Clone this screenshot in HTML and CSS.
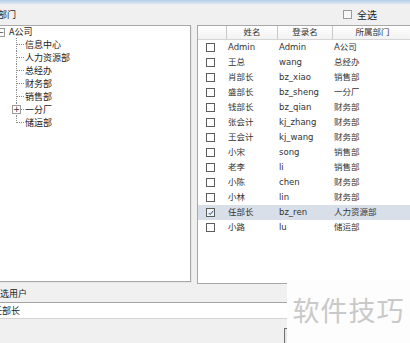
FILE: index.html
```html
<!DOCTYPE html>
<html lang="zh-CN">
<head>
  <meta charset="UTF-8">
  <title>选择用户</title>
  <link rel="stylesheet" href="styles.css">
</head>
<body>
  <div class="titlebar"></div>

  <div class="toolbar">
    <span class="caption">部门</span>
    <label class="select-all"><span class="box"></span>全选</label>
  </div>

  <div class="panels">
    <div class="tree-panel">
      <div class="tree-root"><span class="expander">−</span>A公司</div>
      <ul class="tree-children">
        <li>信息中心</li>
        <li>人力资源部</li>
        <li>总经办</li>
        <li>财务部</li>
        <li>销售部</li>
        <li class="collapsed"><span class="expander">+</span>一分厂</li>
        <li>储运部</li>
      </ul>
    </div>

    <div class="user-panel">
      <div class="grid-head">
        <div></div>
        <div>姓名</div>
        <div>登录名</div>
        <div>所属部门</div>
      </div>
      <div class="grid-body" id="gridBody"></div>
    </div>
  </div>

  <div class="selected-caption">已选用户</div>
  <div class="selected-input">任部长</div>
  <div class="actions"><button class="btn">确定</button></div>

  <div class="watermark">软件技巧</div>

  <script>
    const users = [
      ["Admin", "Admin", "A公司"],
      ["王总", "wang", "总经办"],
      ["肖部长", "bz_xiao", "销售部"],
      ["盛部长", "bz_sheng", "一分厂"],
      ["钱部长", "bz_qian", "财务部"],
      ["张会计", "kj_zhang", "财务部"],
      ["王会计", "kj_wang", "财务部"],
      ["小宋", "song", "销售部"],
      ["老李", "li", "销售部"],
      ["小陈", "chen", "财务部"],
      ["小林", "lin", "财务部"],
      ["任部长", "bz_ren", "人力资源部", true],
      ["小路", "lu", "储运部"]
    ];

    const gridBody = document.getElementById("gridBody");

    users.forEach(function (u) {
      const row = document.createElement("div");
      row.className = u[3] ? "grid-row selected" : "grid-row";
      const tick = u[3]
        ? '<svg viewBox="0 0 8 8" width="6" height="6"><polyline points="1,4 3,6 7,1" fill="none" stroke="#2b4a6b" stroke-width="1.3"/></svg>'
        : "";
      row.innerHTML =
        '<div class="cell-check"><span class="box">' + tick + '</span></div>' +
        '<div>' + u[0] + '</div>' +
        '<div>' + u[1] + '</div>' +
        '<div>' + u[2] + '</div>';
      gridBody.appendChild(row);
    });
  </script>
</body>
</html>
```

FILE: styles.css
```css
body {
  margin: 0;
  width: 410px;
  height: 343px;
  overflow: hidden;
  position: relative;
  background: #f0f0f0;
  color: #222;
  font-family: "Noto Sans CJK SC", sans-serif;
  font-size: 9px;
}

.titlebar {
  height: 4px;
  background: linear-gradient(to bottom, #b6cde6, #dbe7f4);
}

.toolbar {
  height: 21px;
  display: flex;
  align-items: center;
  justify-content: space-between;
  padding-right: 33px;
}

.caption {
  margin-left: -2px;
}

.select-all {
  display: flex;
  align-items: center;
  gap: 5px;
  font-size: 10px;
}

.select-all .box {
  width: 7px;
  height: 7px;
  border: 1px solid #9a9a9a;
  background: #f7f7f7;
}

/* две панели: дерево и список */
.panels {
  display: flex;
  align-items: flex-start;
  gap: 6px;
  height: 259px;
  margin-left: -10px;
}

.tree-panel {
  width: 199px;
  height: 255px;
  flex-shrink: 0;
  background: #fff;
  border: 1px solid #a8a8a8;
  box-shadow: 1px 1px 0 #e6e6e6;
}

.tree-root {
  height: 12px;
  line-height: 12px;
  display: flex;
  align-items: center;
}

.expander {
  width: 7px;
  height: 7px;
  border: 1px solid #9a9a9a;
  background: #fff;
  font-size: 8px;
  line-height: 7px;
  text-align: center;
  color: #333;
  font-family: "DejaVu Sans", sans-serif;
}

.tree-root .expander {
  margin-left: 5px;
  margin-right: 4px;
}

.tree-children {
  list-style: none;
  margin: 0 0 0 25px;
  padding: 0;
}

.tree-children li {
  position: relative;
  height: 13px;
  line-height: 13px;
  padding-left: 9px;
}

.tree-children li::before {
  content: "";
  position: absolute;
  left: 0;
  top: 0;
  height: 100%;
  border-left: 1px dotted #8c8c8c;
}

.tree-children li:last-child::before {
  height: 50%;
}

.tree-children li::after {
  content: "";
  position: absolute;
  left: 1px;
  top: 6px;
  width: 7px;
  border-top: 1px dotted #8c8c8c;
}

.tree-children .collapsed .expander {
  position: absolute;
  left: -4px;
  top: 2px;
  z-index: 1;
}

.user-panel {
  width: 240px;
  height: 257px;
  flex-shrink: 0;
  background: #fff;
  border: 1px solid #a8a8a8;
  font-family: "DejaVu Sans", "Noto Sans CJK SC", sans-serif;
  font-size: 8.5px;
  color: #333;
}

.grid-head,
.grid-row {
  display: grid;
  grid-template-columns: 28px 51px 55px 80px 26px;
}

.grid-head {
  height: 13px;
  line-height: 13px;
  background: linear-gradient(to bottom, #ffffff, #f2f2f2);
  border-bottom: 1px solid #d6d6d6;
  text-align: center;
}

.grid-head div + div {
  border-left: 1px solid #c9c9c9;
}

.grid-row {
  height: 15px;
  line-height: 15px;
}

.grid-row div + div {
  padding-left: 2px;
  white-space: nowrap;
}

.grid-row.selected {
  background: #d8dfe9;
}

.cell-check {
  display: flex;
  align-items: center;
  padding-left: 8px;
}

.cell-check .box {
  width: 7px;
  height: 7px;
  border: 1px solid #5c5c5c;
  background: #fff;
  display: flex;
  align-items: center;
  justify-content: center;
}

.selected .cell-check .box {
  background: #eef3f8;
}

.selected-caption {
  height: 18px;
  line-height: 19px;
  margin-left: -9px;
}

.selected-input {
  height: 15px;
  line-height: 15px;
  background: #fff;
  border-top: 1px solid #a4a4a4;
  border-bottom: 1px solid #d4d4d4;
  padding-left: 0;
  text-indent: -7px;
}

.actions {
  padding: 9px 0 0 284px;
}

.btn {
  width: 70px;
  height: 22px;
  border: 1px solid #707070;
  background: #e6e6e6;
  font-family: inherit;
  font-size: 9px;
}

.watermark {
  position: absolute;
  right: 0;
  bottom: 0;
  width: 123px;
  height: 63px;
  background: #fdfdfd;
  color: #c9c9c9;
  font-size: 27px;
  line-height: 60px;
  text-align: center;
  letter-spacing: 1px;
}
```
